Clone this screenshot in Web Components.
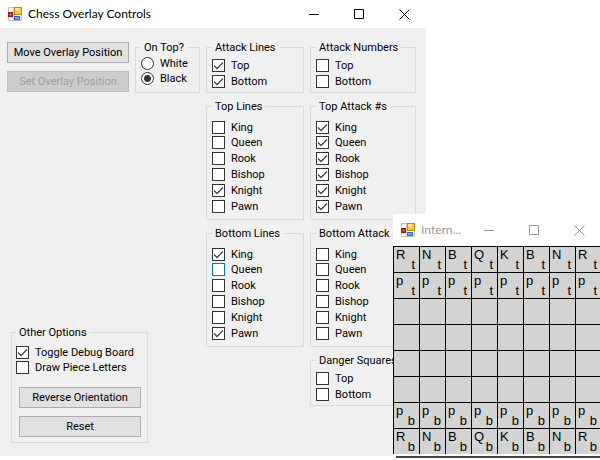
<!DOCTYPE html>
<html lang="en">
<head>
<meta charset="utf-8">
<title>Chess Overlay Controls</title>
<style>
html, body { margin: 0; min-height: 100vh; background: #fff; }
body { position: relative; overflow: hidden; font: 11px/14px Roboto, "Liberation Sans", Arial, sans-serif; color: #000; }
app-window.main { width: 71%; }
app-window.debug { position: absolute; right: -1px; top: 214px; width: 208px; --bar: 32px; --ink: #999; --title: #999; --face: #fff; }
</style>
</head>
<body>
<app-window class="main" heading="Chess Overlay Controls">
  <overlay-controls></overlay-controls>
</app-window>
<app-window class="debug" heading="Intern...">
  <chess-board></chess-board>
</app-window>

<script>
class Base extends HTMLElement {
  constructor() { super(); this.attachShadow({ mode: 'open' }); }
  connectedCallback() { this.shadowRoot.innerHTML = this.render(); }
}

customElements.define('app-window', class extends Base {
  render() {
    return `<style>
      :host { display: block; background: var(--face, #f0f0f0); }
      header { display: flex; align-items: center; height: var(--bar, 28px); background: #fff; padding-left: 8px; gap: 6px; }
      .icon { flex: none; display: block; }
      h1 { flex: 1; min-width: 0; margin: 0; font: 12px/16px Lato, "Open Sans", sans-serif; color: var(--title, #000); white-space: nowrap; }
      nav { display: flex; }
      button { width: 45px; height: 26px; border: 0; background: none; padding: 0 16px 0 18px; color: var(--ink, #000); }
      button svg { display: block; fill: none; stroke: currentColor; }
    </style>
    <header>
      <svg class="icon" width="14" height="14" viewBox="0 0 14 14" aria-hidden="true">
        <path d="M.5.5h13v13h-13z" fill="#fff" stroke="#c0c0c0"/>
        <path d="M5.500 1v12M1 10.500h12" stroke="#d4d4d4"/>
        <rect x="0" y="5" width="5" height="5" fill="#a01810"/><rect x="1" y="6" width="3" height="3" fill="#d03020"/><rect x="2" y="7" width="1" height="1" fill="#f0a090"/>
        <rect x="6" y="0" width="8" height="8" fill="#c08810"/><rect x="7" y="1" width="6" height="6" fill="#fcc838"/><rect x="7" y="1" width="4" height="3" fill="#ffe488"/>
        <rect x="6" y="9" width="6" height="4" fill="#3468d0"/><rect x="7" y="10" width="4" height="2" fill="#70a8f8"/>
      </svg>
      <h1>${this.getAttribute('heading')}</h1>
      <nav>
        <button aria-label="Minimize"><svg width="11" height="11"><path d="M0 5.500h10"/></svg></button>
        <button aria-label="Maximize"><svg width="11" height="11"><path d="M.5.5h9v9h-9z"/></svg></button>
        <button aria-label="Close"><svg width="11" height="11"><path d="M.5.5l10 10M10.500.5l-10 10"/></svg></button>
      </nav>
    </header>
    <slot></slot>`;
  }
});

customElements.define('group-box', class extends Base {
  render() {
    return `<style>
      :host { display: block; }
      fieldset { margin: 0; min-width: 0; border: 1px solid #dcdcdc; padding: var(--top, 4px) 5px var(--bottom, 2px) var(--left, 5px); }
      legend { height: 13px; padding: 0 3px; white-space: nowrap; }
    </style>
    <fieldset><legend>${this.getAttribute('label')}</legend><slot></slot></fieldset>`;
  }
});

customElements.define('option-item', class extends Base {
  render() {
    const type = this.getAttribute('type') || 'checkbox';
    return `<style>
      :host { display: block; }
      label { display: flex; gap: 6px; padding-top: 1px; height: calc(var(--row, 16px) - 1px); white-space: nowrap; }
      input { appearance: none; box-sizing: border-box; flex: none; width: 13px; height: 13px; margin: 0; border: 1px solid #333; background: #fff; }
      input:checked { background: #fff url("data:image/svg+xml,%3Csvg xmlns='http://www.w3.org/2000/svg' width='11' height='11'%3E%3Cpath d='M1 5.500l3 3 6-6' fill='none' stroke='%23444' stroke-width='1.300'/%3E%3C/svg%3E"); }
      input[type=radio] { border-radius: 50%; }
      input[type=radio]:checked { background: radial-gradient(circle, #333 3px, #fff 4px); }
      :host([hot]) input { border-color: #0078d7; }
    </style>
    <label><input type="${type}" ${type === 'radio' ? 'name="side"' : ''} ${this.hasAttribute('checked') ? 'checked' : ''}><span><slot></slot></span></label>`;
  }
});

customElements.define('push-button', class extends Base {
  render() {
    return `<style>
      :host { display: block; }
      button { display: block; box-sizing: border-box; width: 100%; height: 21px; padding: 0; border: 1px solid #adadad; background: #e1e1e1; color: #000; font: inherit; white-space: nowrap; }
      button:disabled { background: #ccc; border-color: #bfbfbf; color: #a0a0a0; }
    </style>
    <button ${this.hasAttribute('disabled') ? 'disabled' : ''}><slot></slot></button>`;
  }
});

const pieces = ['King', 'Queen', 'Rook', 'Bishop', 'Knight', 'Pawn'];
const group = (label, names, on = [], hot = '') =>
  `<group-box label="${label}" class="${names.length > 2 ? 'long' : ''}">${names.map(n =>
    `<option-item ${on.includes(n) ? 'checked' : ''} ${n === hot ? 'hot' : ''}>${n}</option-item>`).join('')}</group-box>`;

customElements.define('overlay-controls', class extends Base {
  render() {
    const pair = ['Top', 'Bottom'];
    return `<style>
      :host { display: grid; grid-template-columns: 193fr 98fr 106fr; gap: 6px; padding: 13px 10px 13px 7px; }
      .col { display: flex; flex-direction: column; gap: 7px; min-width: 0; }
      .last { padding-bottom: 37px; }
      .first { justify-content: space-between; }
      .top { display: grid; grid-template-columns: 122fr 65fr; gap: 6px; }
      .buttons { display: grid; gap: 8px; align-content: start; padding-top: 1px; }
      .long { --top: 7px; --bottom: 4px; }
      .long option-item:first-child { --row: 15px; }
      .side { --row: 15px; --top: 2px; --bottom: 6px; }
      .other { width: 137px; margin-left: 4px; --row: 15px; --top: 6px; --left: 4px; --bottom: 5px; }
      .other .buttons { padding: 12px 1px 0 3px; }
    </style>
    <div class="col first">
      <div class="top">
        <div class="buttons"><push-button>Move Overlay Position</push-button><push-button disabled>Set Overlay Position</push-button></div>
        <group-box class="side" label="On Top?"><option-item type="radio">White</option-item><option-item type="radio" checked>Black</option-item></group-box>
      </div>
      <group-box class="other" label="Other Options">
        <option-item checked>Toggle Debug Board</option-item><option-item>Draw Piece Letters</option-item>
        <div class="buttons"><push-button>Reverse Orientation</push-button><push-button>Reset</push-button></div>
      </group-box>
    </div>
    <div class="col">${group('Attack Lines', pair, pair)}${group('Top Lines', pieces, ['Knight'])}${group('Bottom Lines', pieces, ['King', 'Pawn'], 'Queen')}</div>
    <div class="col last">${group('Attack Numbers', pair)}${group('Top Attack #s', pieces, pieces)}${group('Bottom Attack #s', pieces)}${group('Danger Squares', pair)}</div>`;
  }
});

customElements.define('chess-board', class extends Base {
  render() {
    const rows = ['RNBQKBNR', 'pppppppp', '', '', '', '', 'pppppppp', 'RNBQKBNR'];
    const cell = (c, r) => c ? `<div><span>${c}</span><span class="side">${r < 4 ? 't' : 'b'}</span></div>` : '';
    return `<style>
      :host { display: block; }
      table { width: 100%; table-layout: fixed; border-spacing: 0; background: #d3d3d3; }
      td { box-sizing: border-box; height: 26px; padding: 0; border: solid #000; border-width: 1px 0 0 1px; }
      div { display: flex; justify-content: space-between; height: 25px; padding: 0 4px 0 2px; font: 13px/15px "Liberation Sans", Arial, sans-serif; }
      .side { align-self: end; }
      footer { height: 2px; margin: 2px 0 0 3px; background: #444; }
    </style>
    <table>${rows.map((row, r) => `<tr>${Array.from({ length: 8 }, (_, i) => `<td>${cell(row[i], r)}</td>`).join('')}</tr>`).join('')}</table>
    <footer></footer>`;
  }
});
</script>
</body>
</html>
